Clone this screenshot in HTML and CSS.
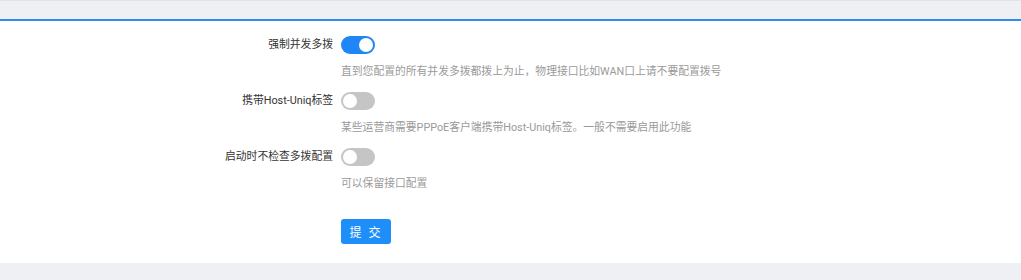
FILE: index.html
```html
<!DOCTYPE html>
<html lang="zh-CN">
<head>
<meta charset="utf-8">
<title>多拨设置</title>
<link rel="stylesheet" href="styles.css">
</head>
<body>
<div class="topbar"></div>
<main class="panel">
  <form class="form">
    <div class="item">
      <div class="label">强制并发多拨</div>
      <div class="control">
        <span class="switch on"><span class="knob"></span></span>
        <div class="desc">直到您配置的所有并发多拨都拨上为止，物理接口比如WAN口上请不要配置拨号</div>
      </div>
    </div>
    <div class="item">
      <div class="label">携带Host-Uniq标签</div>
      <div class="control">
        <span class="switch"><span class="knob"></span></span>
        <div class="desc">某些运营商需要PPPoE客户端携带Host-Uniq标签。一般不需要启用此功能</div>
      </div>
    </div>
    <div class="item">
      <div class="label">启动时不检查多拨配置</div>
      <div class="control">
        <span class="switch"><span class="knob"></span></span>
        <div class="desc">可以保留接口配置</div>
      </div>
    </div>
    <div class="item actions">
      <div class="label"></div>
      <div class="control">
        <button type="button" class="btn">提 交</button>
      </div>
    </div>
  </form>
</main>
<div class="footer"></div>
</body>
</html>
```
FILE: styles.css
```css
html, body {
  margin: 0;
  padding: 0;
}
body {
  background: #eef0f3;
  font-family: Roboto, "Noto Sans CJK SC", "Liberation Sans", sans-serif;
  font-size: 10.8px;
  color: #333;
  height: 280px;
  overflow: hidden;
}
.topbar {
  height: 18px;
  border-top: 1px solid #e2e4e8;
  background: #eef0f3;
}
.panel {
  background: #fff;
  border-top: 2px solid #2d8cf0;
  height: 242px;
  box-sizing: content-box;
  padding: 0;
}
.form {
  padding-top: 15px;
}
.item {
  display: grid;
  grid-template-columns: 341px 1fr;
  margin-bottom: 12px;
}
.label {
  text-align: right;
  padding-right: 8px;
  line-height: 18px;
  height: 18px;
  color: #333;
  white-space: nowrap;
}
.control {
  display: flex;
  flex-direction: column;
  align-items: flex-start;
}
.switch {
  display: block;
  position: relative;
  width: 34px;
  height: 18px;
  border-radius: 9px;
  background: #c5c5c5;
}
.switch.on {
  background: #1e86f7;
}
.knob {
  position: absolute;
  top: 2px;
  left: 2px;
  width: 14px;
  height: 14px;
  border-radius: 50%;
  background: #fff;
}
.switch.on .knob {
  left: 18px;
}
.desc {
  margin-top: 10px;
  line-height: 16px;
  color: #9a9a9a;
  white-space: nowrap;
}
.actions {
  margin-top: 27px;
}
.btn {
  width: 50px;
  height: 25px;
  border: 0;
  border-radius: 3px;
  background: #1e8ef8;
  color: #fff;
  font-family: inherit;
  font-size: 12px;
  letter-spacing: 2px;
  padding: 0;
  cursor: pointer;
}
.footer {
  height: 17px;
  background: #eef0f3;
}
```
